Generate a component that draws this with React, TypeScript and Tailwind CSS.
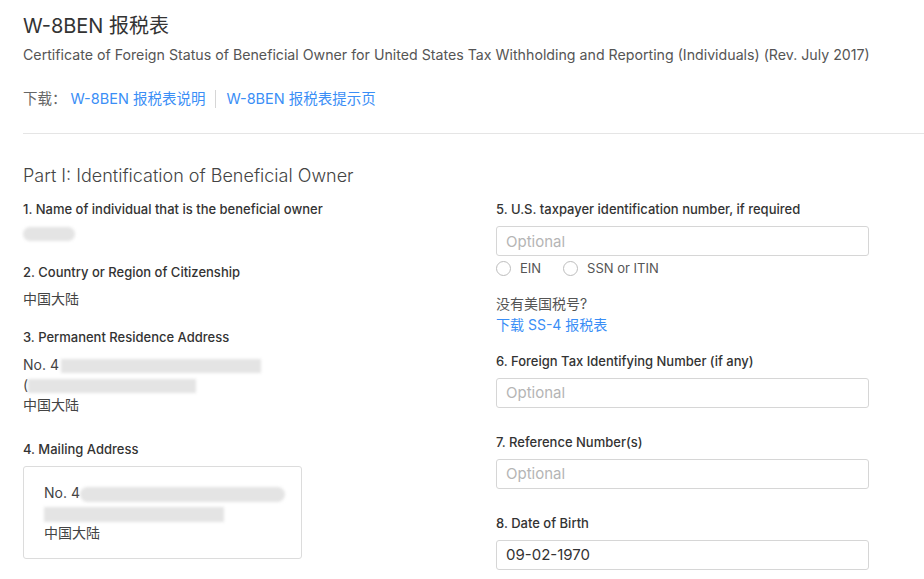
import React from 'react';

const font = { fontFamily: 'Inter, "Noto Sans CJK SC", sans-serif' };

function Label({ children }: { children: React.ReactNode }) {
  return <div className="text-[13px] font-medium text-[#333] leading-[18px]">{children}</div>;
}

function Field({ value, placeholder }: { value?: string; placeholder?: string }) {
  return (
    <input
      readOnly
      value={value}
      placeholder={placeholder}
      className="w-[373px] h-[30px] border border-[#d6d6d6] rounded-[3px] px-[9px] text-[15px] text-[#333] placeholder:text-[#b5b5b5] outline-none"
    />
  );
}

function Blur({ className }: { className: string }) {
  return <span className={`inline-block bg-[#e4e4e4] blur-[1.5px] align-middle ${className}`} />;
}

function Radio({ label }: { label: string }) {
  return (
    <label className="flex items-center gap-[9px] text-[13px] text-[#555]">
      <span className="w-[15px] h-[15px] rounded-full border border-[#bdbdbd]" />
      {label}
    </label>
  );
}

export default function App() {
  return (
    <div className="w-[924px] h-[579px] overflow-hidden bg-white text-[#333]" style={font}>
      <div className="pl-[23px] pt-[12px]">
        <h1 className="text-[20px] leading-[28px] text-[#333]">W-8BEN 报税表</h1>
        <p className="mt-[3px] text-[14.2px] leading-[24px] text-[#555]">
          Certificate of Foreign Status of Beneficial Owner for United States Tax Withholding and Reporting (Individuals) (Rev. July 2017)
        </p>
        <div className="mt-[22px] flex items-center text-[14.5px] leading-[20px]">
          <span className="text-[#666]">下载：</span>
          <a className="ml-[4px] text-[#3a8ef6]">W-8BEN 报税表说明</a>
          <span className="mx-[10px] h-[18px] border-l border-[#d6d6d6]" />
          <a className="text-[#3a8ef6]">W-8BEN 报税表提示页</a>
        </div>
        <div className="mt-[24px] border-t border-[#e5e5e5]" />
      </div>

      <div className="pl-[23px] pt-[30px]">
        <h2 className="text-[18px] leading-[24px] font-light text-[#444]">Part I: Identification of Beneficial Owner</h2>
        <div className="mt-[12px] flex">
          <div className="w-[473px]">
            <Label>1. Name of individual that is the beneficial owner</Label>
            <div className="mt-[6px] h-[20px] flex items-center">
              <Blur className="w-[52px] h-[14px] rounded-full" />
            </div>
            <div className="mt-[19px]">
              <Label>2. Country or Region of Citizenship</Label>
            </div>
            <div className="mt-[8px] text-[14px] leading-[20px] text-[#444]">中国大陆</div>
            <div className="mt-[19px]">
              <Label>3. Permanent Residence Address</Label>
            </div>
            <div className="mt-[9px] text-[14px] leading-[20px] text-[#444]">
              <div className="h-[20px] whitespace-nowrap">No. 4<Blur className="w-[200px] h-[14px] ml-[2px]" /></div>
              <div className="h-[20px] whitespace-nowrap">(<Blur className="w-[168px] h-[14px]" /></div>
              <div>中国大陆</div>
            </div>
            <div className="mt-[25px]">
              <Label>4. Mailing Address</Label>
            </div>
            <div className="mt-[8px] w-[279px] h-[93px] border border-[#dcdcdc] rounded-[3px] px-[20px] pt-[16px] text-[14px] leading-[20px] text-[#444]">
              <div className="h-[20px] whitespace-nowrap">No. 4<Blur className="w-[205px] h-[15px] rounded-full" /></div>
              <div className="h-[20px] whitespace-nowrap"><Blur className="w-[180px] h-[15px]" /></div>
              <div>中国大陆</div>
            </div>
          </div>

          <div>
            <Label>5. U.S. taxpayer identification number, if required</Label>
            <div className="mt-[8px]">
              <Field placeholder="Optional" />
            </div>
            <div className="mt-[3px] flex gap-[22px]">
              <Radio label="EIN" />
              <Radio label="SSN or ITIN" />
            </div>
            <div className="mt-[15px] text-[14px] leading-[20px] text-[#555]">没有美国税号?</div>
            <a className="block mt-[1px] text-[14px] leading-[20px] text-[#3a8ef6]">下载 SS-4 报税表</a>
            <div className="mt-[17px]">
              <Label>6. Foreign Tax Identifying Number (if any)</Label>
            </div>
            <div className="mt-[8px]">
              <Field placeholder="Optional" />
            </div>
            <div className="mt-[25px]">
              <Label>7. Reference Number(s)</Label>
            </div>
            <div className="mt-[8px]">
              <Field placeholder="Optional" />
            </div>
            <div className="mt-[25px]">
              <Label>8. Date of Birth</Label>
            </div>
            <div className="mt-[8px]">
              <Field value="09-02-1970" />
            </div>
          </div>
        </div>
      </div>
    </div>
  );
}
